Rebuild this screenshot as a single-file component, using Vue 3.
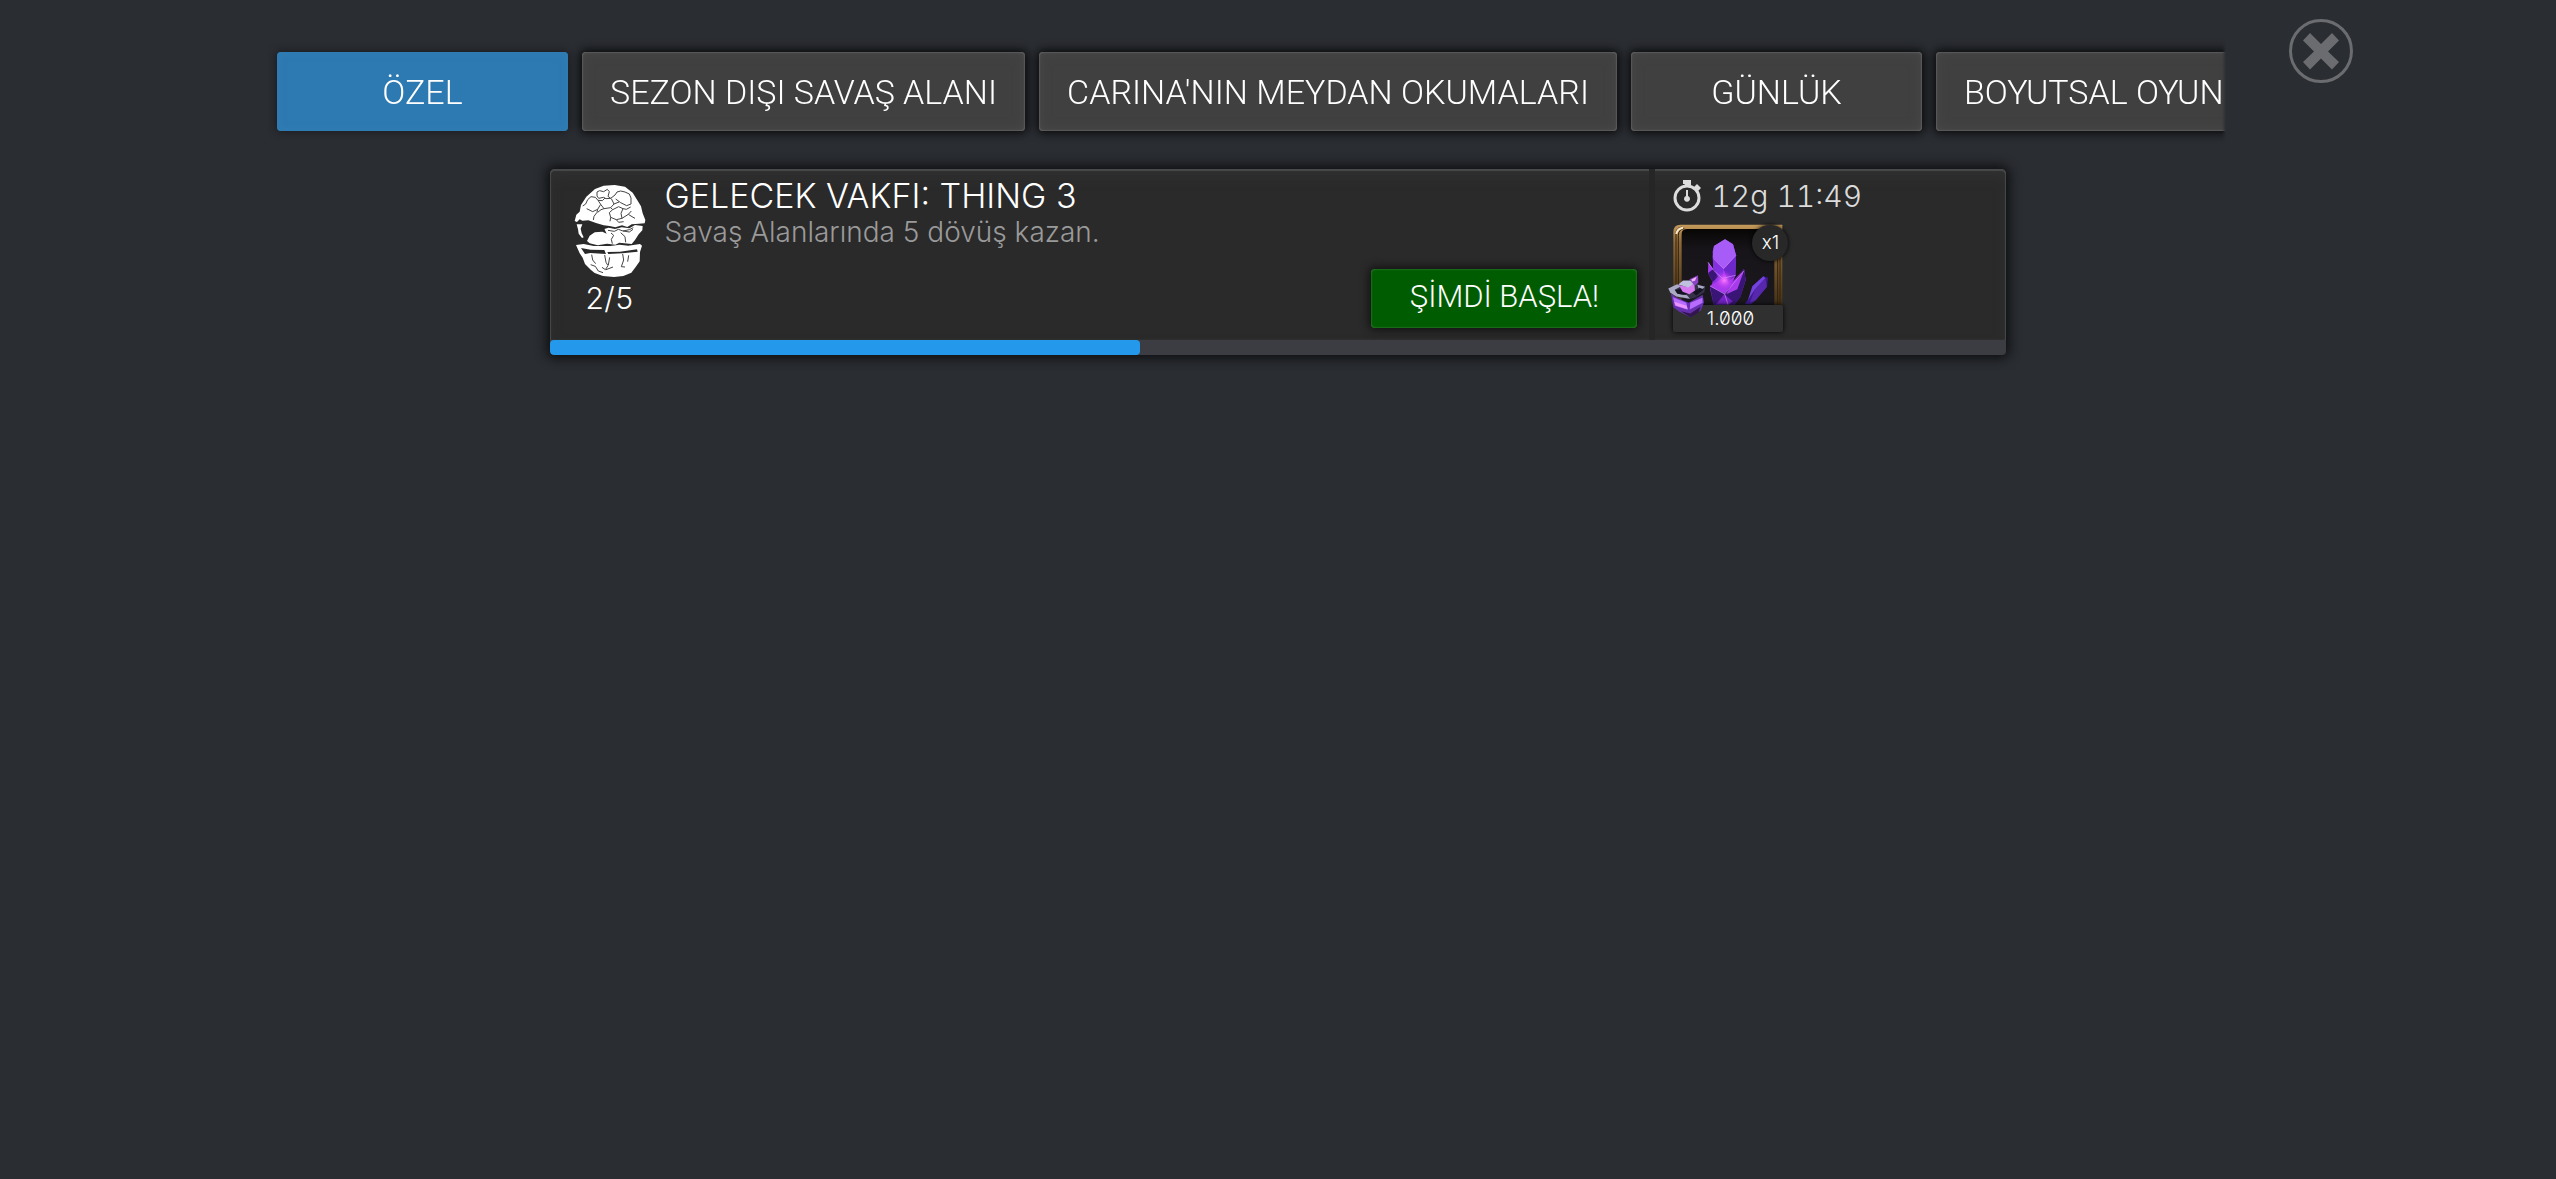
<template>
  <div class="page">
    <header class="header">
      <nav class="tabs" aria-label="Görevler">
        <button
          v-for="tab in tabs"
          :key="tab"
          type="button"
          class="tab"
          :class="{ active: tab === activeTab }"
          @click="activeTab = tab"
        >
          {{ tab }}
        </button>
      </nav>
      <button type="button" class="close" aria-label="Kapat">
        <svg viewBox="0 0 64 64" aria-hidden="true">
          <circle cx="32" cy="32" r="30.5" />
          <path d="M21 14 L32 25 L43 14 L50 21.500 L39 32.500 L50 43 L43 50.500 L32 39.500 L21 50.500 L14 43 L25 32.500 L14 21.500 Z" />
        </svg>
      </button>
    </header>

    <main class="card">
      <div class="card-body">
        <div class="status">
          <svg class="face" viewBox="42 45 214 276" aria-hidden="true">
            <g class="rock">
              <path d="M43 153 L48 134 L58 125 L62 105 L78 80 L104 57 L130 47 L163 45 L194 50 L217 68 L231 91 L242 109 L247 130 L255 150 L253 160 L235 161 L214 163 L201 171 L185 166 L165 172 L148 168 L130 166 L107 159 L84 151 L66 152 L58 148 L50 156 Z" />
              <path d="M49 163 L66 163 L61 176 L64 190 L70 202 L65 204 L55 191 L53 178 Z" />
              <path d="M80 213 L88 197 L103 187 L126 185 L139 191 L132 177 L145 173 L164 177 L184 172 L207 175 L224 165 L247 168 L246 181 L235 193 L224 210 L214 222 L177 218 L165 224 L140 221 L112 226 L88 220 Z" />
              <path d="M47 225 L70 222 L100 228 L150 228 L178 224 L204 227 L239 222 L245 227 L239 246 L238 274 L226 291 L213 308 L189 318 L161 321 L128 318 L103 309 L92 300 L74 282 L67 263 L58 250 Z" />
            </g>
            <g class="cracks">
              <path d="M110 66 L118 62 L130 65 L141 58 L147 65 L143 79 L151 85 L137 86 L130 82 L115 85 L110 78 Z" />
              <path d="M82 89 L92 80 L105 82 L113 91 L126 92 L134 84 M82 89 L76 102 L67 108 M79 116 L97 125 L112 118 L121 103 L113 91 M121 103 L131 116 L151 113 L161 102 L153 86 M151 85 L164 75 L170 66 L181 63 L194 66 L207 72 M166 87 L181 98 L199 107 L212 102 L212 84 L207 72 M161 102 L176 96 M151 113 L157 119 L175 110 L188 116 L182 130 L185 145 L168 149 L151 142 L147 128 L157 119 M112 118 L110 127 L101 139 L99 150 M112 127 L122 119 L131 116 M185 145 L204 133 L215 140 L224 145 M188 116 L198 118 L211 111 M204 133 L213 123 M151 142 L149 154 M168 149 L175 157 L190 155" />
              <path d="M143 181 L162 184 L174 178 L188 183 L207 179 L219 173 M188 183 L207 186 L218 178 M152 189 L160 196 L153 208 L156 221 M181 188 L194 200 L196 217" />
              <path d="M94 254 L97 270 L106 281 M133 255 L137 277 L143 287 L135 299 L125 292 M148 262 L144 285 M187 252 L190 270 L183 290 L194 291 M205 256 L202 275 M91 284 L105 289 L114 303 L128 308 M137 299 L158 291" />
            </g>
            <path class="hollow" d="M62 234 L91 239 L132 240 L137 252 L90 249 L74 252 Z M141 246 L179 245 L230 238 L232 245 L186 250 L144 252 Z M113 164 L132 171 L132 182 L108 184 L88 193 L78 209 L73 207 L67 187 L69 166 L91 158 Z" />
          </svg>
          <span class="count">{{ done }}/{{ total }}</span>
        </div>

        <div class="info">
          <h1>GELECEK VAKFI: THING 3</h1>
          <p>Savaş Alanlarında 5 dövüş kazan.</p>
          <button type="button" class="start">ŞİMDİ BAŞLA!</button>
        </div>

        <aside class="reward">
          <div class="timer">
            <svg viewBox="0 0 28 32" aria-hidden="true">
              <circle cx="14" cy="18" r="12" />
              <path class="solid" d="M10 0 H18 V5 H16 L23 9 L21 7 L24 4 L28 8 L25 11 L22 9 L17 6 H11 L12 4 H10 Z" />
              <path class="solid" d="M13 10 H15 V16 A3 3 0 1 1 13 16 Z" />
            </svg>
            <time>12g 11:49</time>
          </div>
          <div class="prize">
            <svg class="art" viewBox="27 163 363 324" aria-hidden="true">
              <defs>
                <linearGradient id="gold" x1="0" y1="0" x2="0" y2="1">
                  <stop offset="0" stop-color="#c69b5b" />
                  <stop offset="0.2" stop-color="#8b6836" />
                  <stop offset="1" stop-color="#3b2a12" />
                </linearGradient>
                <linearGradient id="inside" x1="0" y1="0" x2="0" y2="1">
                  <stop offset="0" stop-color="#080604" />
                  <stop offset="0.25" stop-color="#17151a" />
                  <stop offset="1" stop-color="#1b191e" />
                </linearGradient>
                <linearGradient id="gem" x1="0" y1="0" x2="0" y2="1">
                  <stop offset="0" stop-color="#9b50f2" />
                  <stop offset="0.6" stop-color="#a932f5" />
                  <stop offset="1" stop-color="#4c20a6" />
                </linearGradient>
                <radialGradient id="glow">
                  <stop offset="0" stop-color="#ff7bff" />
                  <stop offset="1" stop-color="#b82df5" stop-opacity="0" />
                </radialGradient>
              </defs>
              <path fill="url(#gold)" d="M43 430 V187 Q43 165 65 165 H370 V430 Z" />
              <path fill="none" stroke="#302110" stroke-width="3" d="M51 430 V193 Q51 173 70 172 M58 430 V198 Q58 178 76 177 M356 250 V430 M363 250 V430" />
              <path fill="none" stroke="#f8e8c6" stroke-width="6" d="M52 193 Q54 177 72 174" />
              <path fill="url(#inside)" d="M68 430 V192 Q69 178 84 178 H346 V430 Z" />
              <path fill="url(#gem)" d="M161 246 L165 229 L198 209 L222 224 L231 257 L229 319 L222 335 L255 298 L260 331 L245 380 L226 406 H164 L153 357 L161 337 L147 310 L148 277 L163 300 Z" />
              <path fill="#a75cf8" d="M165 229 L198 209 L222 224 L231 257 L194 297 L161 263 Z" />
              <path fill="#6c28c8" d="M231 257 L229 319 L207 337 L194 297 Z" />
              <path fill="#8131e0" d="M161 263 L194 297 L190 326 L165 341 Z" />
              <path fill="#391575" d="M147 310 L161 337 L177 321 L164 297 Z M153 349 L196 373 L177 404 H164 Z M196 373 L255 298 L260 331 L245 380 L226 406 H207 Z" />
              <path fill="#a83beb" d="M153 349 L190 326 L218 343 L198 371 Z M218 343 L255 303 L235 359 L202 374 Z" />
              <path fill="#7422c4" d="M196 374 L221 395 L211 404 H171 Z" />
              <circle cx="196" cy="332" r="30" fill="url(#glow)" />
              <path fill="none" stroke="#dd88ff" stroke-width="2" d="M147 278 L164 302 L190 326 L230 317 M153 349 L197 373 L255 303 M231 257 L194 297 L163 267 M197 373 L207 405" />
              <path fill="#3e198f" d="M257 404 L278 373 L280 350 L313 320 L327 324 L324 351 L290 392 L276 404 Z" />
              <path fill="#7442df" d="M280 350 L313 320 L319 326 L287 360 L267 391 Z" />
              <path fill="#5728ad" d="M319 326 L324 351 L290 392 L273 399 L287 360 Z" />
            </svg>
            <span class="amount">1.000</span>
            <svg class="shard" viewBox="24 314 120 134" aria-hidden="true">
              <path fill="#6630ae" d="M36 372 L53 384 L89 400 L131 376 L135 398 L126 422 L94 443 L60 426 L43 413 Z" />
              <path fill="#b76cff" d="M42 383 L82 400 L86 421 L48 409 Z M94 400 L130 385 L131 400 L92 420 Z" />
              <path fill="#e994ff" d="M46 397 L83 409 L86 419 L50 408 Z" />
              <path fill="#32164d" d="M66 425 L94 432 L125 412 L118 430 L94 443 Z" />
              <path fill="#343149" d="M27 357 L56 344 L76 350 L113 343 L139 352 L136 368 L108 385 L87 389 L53 382 L34 370 Z" />
              <path fill="#aaa9c4" d="M28 357 L54 344 L67 350 L47 361 L55 373 L84 377 L93 388 L52 381 L34 370 Z M115 346 L138 352 L120 366 L106 370 L119 357 Z" />
              <path fill="#151422" d="M48 362 L73 356 L89 372 L74 376 L56 373 Z M100 368 L122 355 L134 360 L112 378 Z" />
              <path fill="#d678ef" d="M60 347 L80 351 L106 343 L108 363 L91 374 L71 367 Z" />
              <path fill="#bfc1df" d="M58 345 L72 333 L96 333 L107 341 L88 354 Z" />
              <path fill="#8b43c4" d="M91 329 L117 317 L118 340 L107 349 Z" />
              <path fill="#f3b4ff" d="M97 330 L113 322 L108 334 L99 336 Z" />
            </svg>
            <span class="badge">x1</span>
          </div>
        </aside>
      </div>
      <div class="progress" role="progressbar" :aria-valuenow="done" aria-valuemin="0" :aria-valuemax="total">
        <div class="fill" :style="{ width: `${(done / total) * 100}%` }"></div>
      </div>
    </main>
  </div>
</template>

<script setup>
import { ref } from 'vue'

const tabs = [
  'ÖZEL',
  'SEZON DIŞI SAVAŞ ALANI',
  "CARINA'NIN MEYDAN OKUMALARI",
  'GÜNLÜK',
  'BOYUTSAL OYUNLAR',
]
const activeTab = ref('ÖZEL')
const done = 2
const total = 5
</script>

<style>
body {
  margin: 0;
  background: #2a2d32;
}
</style>

<style scoped>
.page {
  box-sizing: border-box;
  min-height: 100vh;
  padding-top: 19px;
  background: #2a2d32;
  color: #fff;
  font-family: Inter, 'Liberation Sans', sans-serif;
  font-weight: 300;
}

button {
  border: 0;
  color: inherit;
  font: inherit;
  cursor: pointer;
}

.header {
  display: flex;
  align-items: flex-start;
  gap: 63px;
  padding: 0 203px 0 261px;
}

.tabs {
  display: flex;
  flex: 1;
  gap: 14px;
  min-width: 0;
  margin-top: 17px;
  padding: 16px;
  padding-right: 0;
  overflow: hidden;
  mask-image: linear-gradient(to left, transparent, #000 4px);
}

.tab {
  flex: none;
  min-width: 291px;
  height: 79px;
  padding: 0 28px;
  border-radius: 4px;
  background: #404040;
  box-shadow:
    0 0 10px 2px #08090a,
    inset 0 0 2px #8a8a8a,
    inset 0 0 12px #4a4a4a;
  font-family: Roboto, 'Liberation Sans', sans-serif;
  font-size: 34px;
  white-space: nowrap;
}

.tab.active {
  background: #2d79b1;
  box-shadow:
    0 0 8px #15171a,
    inset 0 0 8px #327fb5;
}

.close {
  flex: none;
  width: 64px;
  height: 64px;
  padding: 0;
  background: none;
}

.close svg {
  display: block;
  fill: #6b6c70;
}

.close circle {
  fill: none;
  stroke: #6b6c70;
  stroke-width: 3;
}

.card {
  width: 57%;
  margin: 22px auto 0;
  border-radius: 5px;
  box-shadow: 0 0 12px 3px #0c0d0f;
}

.card-body {
  display: flex;
  min-height: 171px;
  border-radius: 5px 5px 0 0;
  background: #2a2a2a;
  box-shadow:
    inset 0 2px 1px #484b49,
    inset 1px 0 1px #484b49,
    inset -1px 0 1px #484b49,
    inset 0 8px 12px #303030;
}

.status {
  display: flex;
  flex-direction: column;
  align-items: center;
  gap: 4px;
  padding: 16px 19px 0 24px;
}

.face {
  width: 72px;
  height: 92px;
}

.rock {
  fill: #fff;
}

.cracks {
  fill: none;
  stroke: #444;
  stroke-width: 3;
  stroke-linejoin: round;
}

.hollow {
  fill: #292929;
}

.count {
  font-size: 30px;
  font-variant-numeric: tabular-nums;
  line-height: 34px;
}

.info {
  display: flex;
  flex: 1;
  flex-direction: column;
  padding: 8px 12px 12px 0;
}

h1,
p {
  margin: 0;
  font-weight: 300;
}

h1 {
  font-size: 34px;
  line-height: 38px;
}

p {
  color: #9a9a9a;
  font-size: 28px;
  line-height: 34px;
}

.start {
  align-self: flex-end;
  width: 266px;
  height: 59px;
  margin-top: auto;
  padding: 0 0 4px;
  border-radius: 4px;
  background: #005c00;
  box-shadow:
    0 0 8px 2px #111,
    inset 0 0 2px #5a9a5a;
  font-family: Roboto, 'Liberation Sans', sans-serif;
  font-size: 31px;
}

.reward {
  width: 333px;
  padding: 10px 0 8px 18px;
  border-left: 6px solid #262626;
}

.timer {
  display: flex;
  align-items: center;
  gap: 10px;
  height: 34px;
  color: #dcdcdc;
  font-size: 30px;
  font-variant-numeric: tabular-nums;
}

.timer svg {
  width: 28px;
  height: 32px;
}

.timer circle {
  fill: none;
  stroke: #dcdcdc;
  stroke-width: 3;
}

.solid {
  fill: #dcdcdc;
}

.prize {
  position: relative;
  width: 110px;
  height: 107px;
  margin-top: 12px;
}

.art {
  position: absolute;
  top: -1px;
  left: -5px;
  width: 121px;
  height: 108px;
}

.amount {
  position: absolute;
  bottom: 0;
  left: 0;
  width: 110px;
  height: 27px;
  border-radius: 2px;
  background: #303030;
  box-shadow: 0 0 5px #000;
  font-feature-settings: 'zero';
  font-size: 19px;
  line-height: 28px;
  text-align: center;
  text-indent: 4px;
}

.shard {
  position: absolute;
  top: 49px;
  left: -6px;
  width: 40px;
  height: 45px;
}

.badge {
  position: absolute;
  top: 0;
  right: -5px;
  width: 36px;
  height: 36px;
  border-radius: 50%;
  background: #282828;
  box-shadow: 0 0 4px #000;
  font-size: 19px;
  line-height: 36px;
  text-align: center;
}

.progress {
  height: 15px;
  border-radius: 0 0 4px 4px;
  background: #3c3d42;
  overflow: hidden;
}

.fill {
  height: 100%;
  padding-right: 8px;
  border-radius: 4px;
  background: #2499ec;
}
</style>
